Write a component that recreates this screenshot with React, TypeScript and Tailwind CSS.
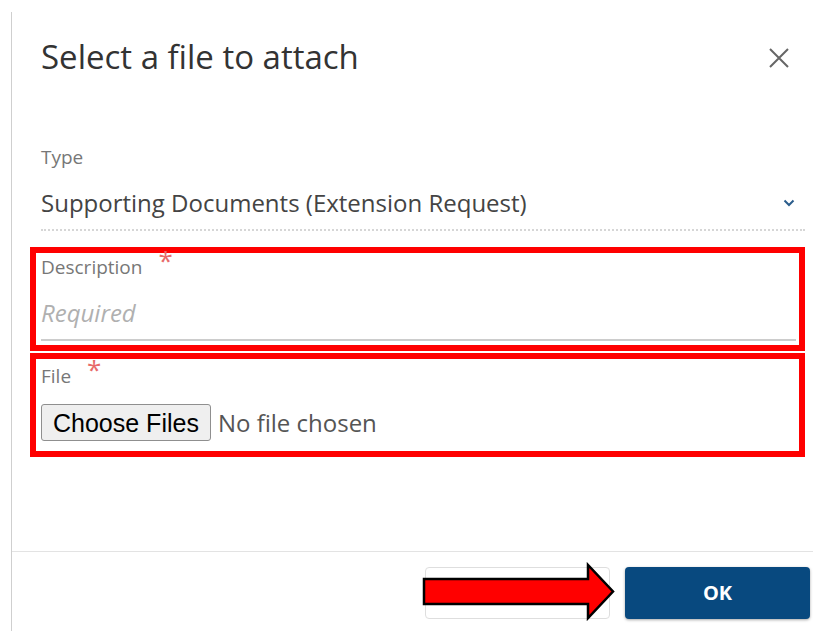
import { ReactNode } from "react";

const ui = { fontFamily: '"Open Sans", "Noto Sans", sans-serif' };

// Rótulo de campo com asterisco de obrigatório
const FieldLabel = ({ children, required }: { children: ReactNode; required?: boolean }) => (
  <div className="flex items-start h-[26px] text-[19px] leading-[26px] text-[#777]">
    <span>{children}</span>
    {required && (
      <span className="ml-[16px] -mt-[10px] text-[26px] leading-[32px] text-[#e86a6a]">*</span>
    )}
  </div>
);

// Caixa vermelha de destaque em volta dos campos
const Highlight = ({ children, className }: { children: ReactNode; className?: string }) => (
  <div className={`border-[6px] border-[#ff0000] pl-[5px] pr-[3px] ${className ?? ""}`}>{children}</div>
);

export default function App() {
  return (
    <div className="relative w-[813px] h-[631px] bg-white overflow-hidden" style={ui}>
      <section className="ml-[11px] mt-[12px] h-[619px] border-l border-[#cfcfcf] flex flex-col">
        {/* Cabeçalho */}
        <header className="flex items-start justify-between pl-[29px] pr-[24px] pt-[24px] h-[132px]">
          <h1 className="text-[33px] leading-[42px] text-[#333]">Select a file to attach</h1>
          <button className="mt-[12px] w-[20px] h-[20px]" aria-label="Close">
            <svg width="20" height="20" viewBox="0 0 20 20">
              <path d="M1 1 L19 19 M19 1 L1 19" stroke="#666" strokeWidth="2" fill="none" />
            </svg>
          </button>
        </header>

        <div className="pl-[18px] pr-[8px] flex flex-col">
          {/* Tipo */}
          <div className="pl-[11px]">
            <FieldLabel>Type</FieldLabel>
            <div className="mt-[17px] h-[44px] flex items-start justify-between border-b-2 border-dotted border-[#d6d6d6] pr-[10px]">
              <span className="text-[24px] leading-[32px] text-[#444]">
                Supporting Documents (Extension Request)
              </span>
              <svg width="12" height="8" viewBox="0 0 12 8" className="mt-[12px]">
                <path d="M1.5 1.5 L6 6 L10.5 1.5" stroke="#2b5d8c" strokeWidth="2" fill="none" />
              </svg>
            </div>
          </div>

          {/* Descrição */}
          <Highlight className="mt-[16px] h-[104px]">
            <div className="pt-[1px]">
              <FieldLabel required>Description</FieldLabel>
              <input
                placeholder="Required"
                className="mt-[17px] w-full h-[44px] pb-[12px] text-[24px] leading-[32px] text-[#444] outline-none border-b-2 border-[#cccccc] placeholder:italic placeholder:text-[#b0b0b0]"
                style={ui}
              />
            </div>
          </Highlight>

          {/* Arquivo */}
          <Highlight className="mt-[2px] h-[104px]">
            <div className="pt-[4px]">
              <FieldLabel required>File</FieldLabel>
              <div className="mt-[15px] flex items-center">
                <button
                  className="h-[37px] px-[11px] bg-[#efefef] border border-[#8f8f8f] rounded-[3px] text-[25px] leading-[30px] text-black"
                  style={{ fontFamily: '"Liberation Sans", Arial, sans-serif' }}
                >
                  Choose Files
                </button>
                <span className="ml-[7px] text-[24px] leading-[32px] text-[#555]">No file chosen</span>
              </div>
            </div>
          </Highlight>
        </div>

        {/* Rodapé com ações */}
        <footer className="mt-auto h-[80px] border-t border-[#e3e3e3] flex justify-end items-start gap-[15px] pt-[15px] pr-[3px]">
          <button className="w-[185px] h-[52px] rounded-[4px] border border-[#dedede] bg-white text-[20px] font-bold text-[#08497f]">
            Cancel
          </button>
          <button className="w-[185px] h-[52px] rounded-[4px] bg-[#08497f] shadow-[0_1px_3px_rgba(0,0,0,0.35)] text-[20px] font-bold text-white">
            OK
          </button>
        </footer>
      </section>

      {/* Seta vermelha apontando para o OK */}
      <svg
        className="absolute left-[421px] top-[562px]"
        width="196"
        height="60"
        viewBox="0 0 196 60"
      >
        <polygon
          points="3,17 167,17 167,3 192,29.5 167,56 167,42 3,42"
          fill="#ff0000"
          stroke="#000"
          strokeWidth="2.5"
          strokeLinejoin="miter"
        />
      </svg>
    </div>
  );
}
